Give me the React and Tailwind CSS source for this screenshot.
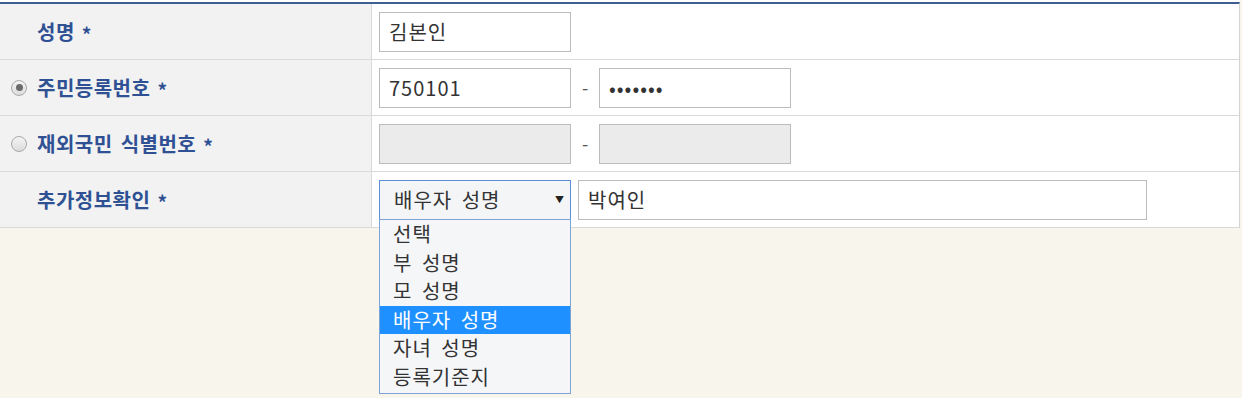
import React from "react";

function Radio({ checked }) {
  return (
    <span className="w-[16px] h-[16px] rounded-full border border-[#a9a9a9] bg-gradient-to-b from-[#f4f4f4] to-[#dcdcdc] flex items-center justify-center mr-[10px] shrink-0">
      {checked && <span className="w-[7px] h-[7px] rounded-full bg-[#6b6b6b]" />}
    </span>
  );
}

function Label({ radio, checked, children }) {
  return (
    <div className={`w-[372px] shrink-0 bg-[#f2f2f2] border-r border-[#d9d9d9] flex items-center ${radio ? "pl-[11px]" : "pl-[37px]"}`}>
      {radio && <Radio checked={checked} />}
      <span className="text-[20px] font-bold text-[#2f5194] tracking-[0.5px] [word-spacing:3px]">{children}</span>
      <span className="ml-[7px] text-[19px] font-bold text-[#2f5194] translate-y-[3px]">*</span>
    </div>
  );
}

function Row({ children }) {
  return <div className="flex h-[56px] border-b border-[#d9d9d9]">{children}</div>;
}

const inputCls = "w-[192px] h-[40px] border border-[#bcbcbc] px-[9px] flex items-center text-[20px] tracking-[1px] text-[#333]";

export default function App() {
  const items = ["선택", "부 성명", "모 성명", "배우자 성명", "자녀 성명", "등록기준지"];
  return (
    <div className="w-[1242px] h-[398px] bg-[#f7f5ec] font-['Noto_Sans_CJK_KR','Noto_Sans',sans-serif] relative overflow-hidden">
      <div className="h-[2px] bg-white w-[1240px]" />
      <div className="w-[1240px] bg-white border-t-2 border-t-[#3f5f94] border-r border-r-[#d3d3d3]">
        <Row>
          <Label>성명</Label>
          <div className="flex-1 flex items-center pl-[7px]">
            <div className={`${inputCls} bg-white`}>김본인</div>
          </div>
        </Row>
        <Row>
          <Label radio checked>주민등록번호</Label>
          <div className="flex-1 flex items-center pl-[7px]">
            <div className={`${inputCls} bg-white`}>750101</div>
            <span className="w-[28px] text-center text-[18px] text-[#555]">-</span>
            <div className={`${inputCls} bg-white text-[#222]`}>•••••••</div>
          </div>
        </Row>
        <Row>
          <Label radio>재외국민 식별번호</Label>
          <div className="flex-1 flex items-center pl-[7px]">
            <div className={`${inputCls} bg-[#ebebeb]`} />
            <span className="w-[28px] text-center text-[18px] text-[#555]">-</span>
            <div className={`${inputCls} bg-[#ebebeb]`} />
          </div>
        </Row>
        <Row>
          <Label>추가정보확인</Label>
          <div className="flex-1 flex items-center pl-[7px]">
            <div className="w-[192px] h-[40px] border border-[#5b8fd6] bg-[#f4f5f7] pl-[14px] pr-[5px] flex items-center justify-between text-[20px] tracking-[1px] [word-spacing:4px] text-[#333]">
              <span>배우자 성명</span>
              <span className="text-[9px] text-[#222]">▼</span>
            </div>
            <div className="ml-[7px] w-[569px] h-[40px] border border-[#bcbcbc] bg-white px-[9px] flex items-center text-[20px] tracking-[1px] text-[#333]">박여인</div>
          </div>
        </Row>
      </div>
      <div className="absolute left-[379px] top-[219px] w-[192px] h-[175px] border border-[#7fa3d9] bg-[#f5f6f8] flex flex-col">
        {items.map((it, i) => (
          <div
            key={it}
            className={`h-[28.5px] flex items-center pl-[13px] text-[20px] tracking-[1px] [word-spacing:4px] leading-none ${i === 3 ? "bg-[#1e90ff] text-white" : "text-[#333]"}`}
          >
            {it}
          </div>
        ))}
      </div>
    </div>
  );
}
